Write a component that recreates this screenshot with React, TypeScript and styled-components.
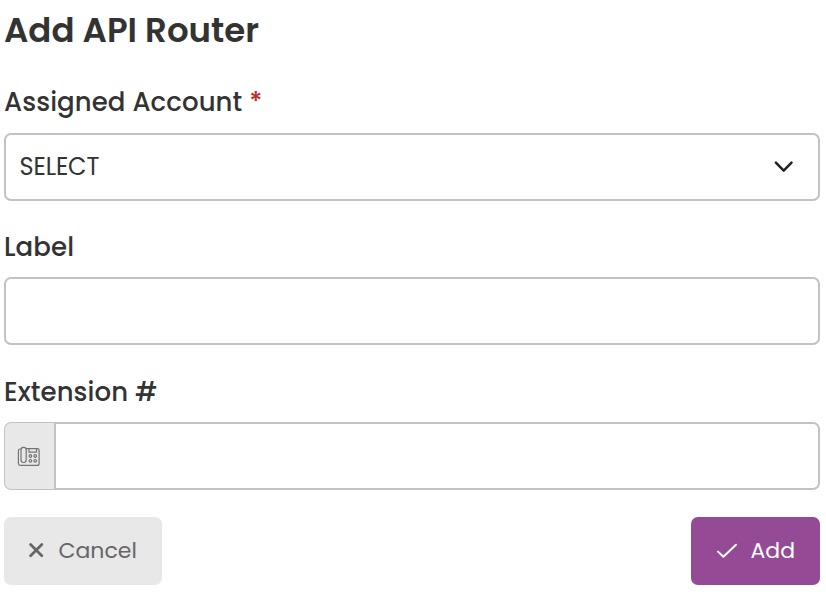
import React from "react";
import styled, { createGlobalStyle } from "styled-components";

const GlobalStyle = createGlobalStyle`
  *, *::before, *::after { box-sizing: border-box; }
  body {
    margin: 0;
    background: #fff;
    color: #333;
    font-family: "Poppins", "Inter", "Open Sans", sans-serif;
    font-feature-settings: "cv11" 1;
    -webkit-font-smoothing: antialiased;
  }
  button, input { font: inherit; font-feature-settings: inherit; color: inherit; }
`;

const Form = styled.form`
  display: flex;
  flex-direction: column;
  padding: 10px 6px 0 4px;
`;

const Title = styled.h1`
  margin: 0 0 28px;
  height: 40px;
  font-size: 34px;
  line-height: 40px;
  font-weight: 600;
  white-space: nowrap;
`;

const Field = styled.div<{ $gap: number }>`
  display: flex;
  flex-direction: column;
  margin-bottom: ${(p) => p.$gap}px;
`;

const Label = styled.label<{ $lineHeight?: number }>`
  height: 50px;
  margin-bottom: 5px;
  font-size: 26px;
  line-height: ${(p) => p.$lineHeight ?? 51}px;
  font-weight: 500;
  letter-spacing: 0.08px;
  white-space: nowrap;
`;

const Required = styled.span`
  color: #b92d25;
`;

const Select = styled.button`
  display: flex;
  align-items: center;
  justify-content: space-between;
  height: 68px;
  padding: 0 24px 2px 13.5px;
  border: 2px solid #c2c2c2;
  border-radius: 7px;
  background: #fff;
  font-size: 24px;
  letter-spacing: -0.12px;
`;

const Input = styled.input<{ $joined?: boolean }>`
  flex: 1;
  min-width: 0;
  height: 68px;
  min-height: 68px;
  padding: 0 14px;
  border: 2px solid #c2c2c2;
  border-radius: ${(p) => (p.$joined ? "0 7px 7px 0" : "7px")};
  background: #fff;
  font-size: 24px;
`;

const InputGroup = styled.div`
  display: flex;
`;

const Addon = styled.span`
  display: flex;
  align-items: center;
  justify-content: center;
  width: 50px;
  height: 68px;
  padding: 1px 1px 0 0;
  border: 1px solid #c2c2c2;
  border-right: 0;
  border-radius: 7px 0 0 7px;
  background: #e8e8e8;
  color: #747474;
`;

const Actions = styled.div`
  display: flex;
  justify-content: space-between;
`;

const Button = styled.button<{ $primary?: boolean }>`
  display: flex;
  align-items: center;
  width: ${(p) => (p.$primary ? 129 : 158)}px;
  height: 68px;
  padding: 0 0 0 24px;
  gap: ${(p) => (p.$primary ? 11.5 : 14.5)}px;
  border: 0;
  border-radius: 7px;
  background: ${(p) => (p.$primary ? "#954a95" : "#e8e8e8")};
  color: ${(p) => (p.$primary ? "#fff" : "#666")};
  font-size: 22px;
`;

const ButtonText = styled.span`
  padding-bottom: 1px;
`;

const ChevronIcon = () => (
  <svg width="20" height="14" viewBox="0 0 20 14" fill="none" stroke="#222" strokeWidth="2.5" strokeLinecap="round" strokeLinejoin="round">
    <path d="M1.9 3.6l7.8 8L17.5 3.6" />
  </svg>
);

const DeskPhoneIcon = () => (
  <svg width="24" height="22" viewBox="0 0 24 22" fill="none" stroke="currentColor" strokeWidth="1.2" strokeLinejoin="round">
    <path d="M4 3H3.2A1.8 1.8 0 0 0 1.4 4.8v12.6A2 2 0 0 0 3.4 19.4H20.1a2 2 0 0 0 2-2V4.3a1.7 1.7 0 0 0-1.7-1.7H9" />
    <rect x="4" y="1.3" width="5.2" height="15.2" rx="2.4" />
    <path d="M12 2.6v3.6h7.5V2.6" />
    <circle cx="13.4" cy="10" r="1.3" />
    <circle cx="18.2" cy="10" r="1.3" />
    <circle cx="13.4" cy="14.8" r="1.3" />
    <circle cx="18.2" cy="14.8" r="1.3" />
  </svg>
);

const CloseIcon = () => (
  <svg width="16" height="16" viewBox="0 0 16 16" fill="none" stroke="currentColor" strokeWidth="2.7" strokeLinecap="round">
    <path d="M2.6 1.5l11.2 11.2M13.8 1.5L2.6 12.7" />
  </svg>
);

const CheckIcon = () => (
  <svg width="24" height="18" viewBox="0 0 24 18" fill="none" stroke="currentColor" strokeWidth="2" strokeLinecap="round" strokeLinejoin="round">
    <path d="M3 9.6l5.4 5.2L21 2.7" />
  </svg>
);

export default function App() {
  return (
    <>
      <GlobalStyle />
      <Form onSubmit={(e) => e.preventDefault()}>
        <Title>Add API Router</Title>
        <Field $gap={21}>
          <Label htmlFor="account" $lineHeight={49}>
            Assigned Account <Required>*</Required>
          </Label>
          <Select id="account" type="button">
            SELECT
            <ChevronIcon />
          </Select>
        </Field>
        <Field $gap={22}>
          <Label htmlFor="label">Label</Label>
          <Input id="label" />
        </Field>
        <Field $gap={27}>
          <Label htmlFor="extension">Extension #</Label>
          <InputGroup>
            <Addon><DeskPhoneIcon /></Addon>
            <Input id="extension" $joined />
          </InputGroup>
        </Field>
        <Actions>
          <Button type="button"><CloseIcon /><ButtonText>Cancel</ButtonText></Button>
          <Button type="submit" $primary><CheckIcon /><ButtonText>Add</ButtonText></Button>
        </Actions>
      </Form>
    </>
  );
}
